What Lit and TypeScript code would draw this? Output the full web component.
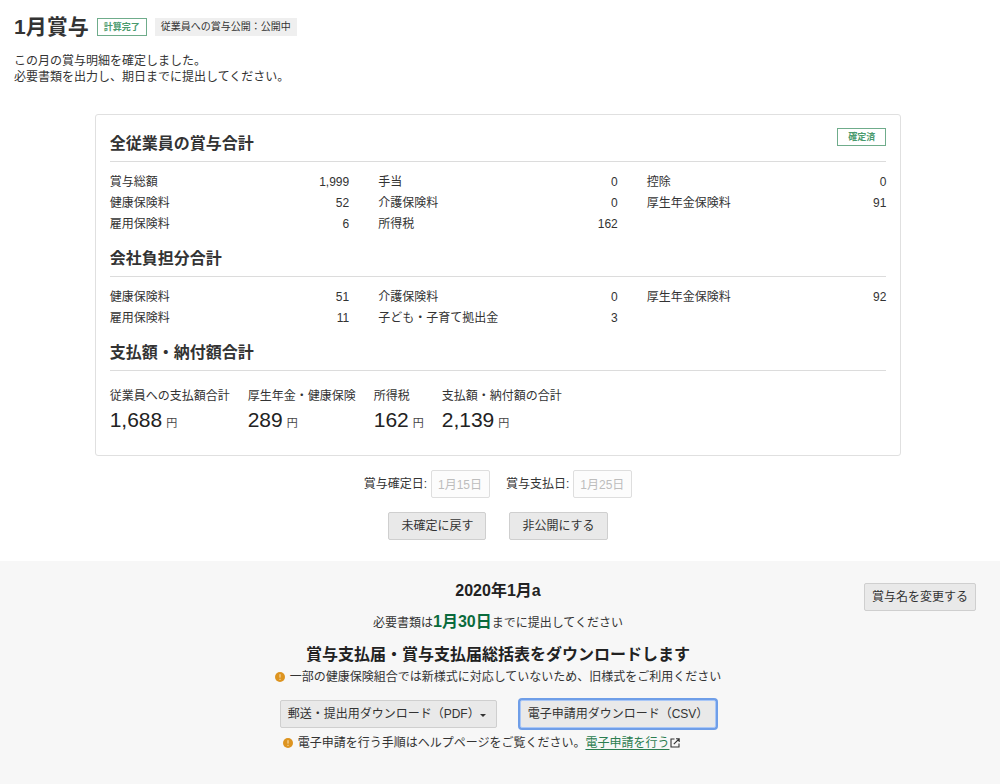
import { LitElement, html, css, svg } from "lit";
import { customElement } from "lit/decorators.js";

type Entry = [label: string, amount: string];

const employeeTotals: Entry[][] = [
  [["賞与総額", "1,999"], ["健康保険料", "52"], ["雇用保険料", "6"]],
  [["手当", "0"], ["介護保険料", "0"], ["所得税", "162"]],
  [["控除", "0"], ["厚生年金保険料", "91"]],
];

const companyTotals: Entry[][] = [
  [["健康保険料", "51"], ["雇用保険料", "11"]],
  [["介護保険料", "0"], ["子ども・子育て拠出金", "3"]],
  [["厚生年金保険料", "92"]],
];

const payments: Entry[] = [
  ["従業員への支払額合計", "1,688"],
  ["厚生年金・健康保険", "289"],
  ["所得税", "162"],
  ["支払額・納付額の合計", "2,139"],
];

const alertIcon = html`<svg class="alert" viewBox="0 0 10 10" aria-hidden="true">
  ${svg`<circle cx="5" cy="5" r="5" fill="#dd9420"/><path d="M5 2.2v3.4M5 6.8v1.1" stroke="#fbe6c0" stroke-width="1"/>`}
</svg>`;

const externalIcon = html`<svg class="external" viewBox="0 0 10 10" aria-hidden="true">
  ${svg`<path d="M4.5 1H1v8h8V5.5M6 .8h3.2V4M9 1 3.8 6.2" fill="none" stroke="#333" stroke-width="1.1"/>`}
</svg>`;

@customElement("app-root")
export class AppRoot extends LitElement {
  static styles = css`
    :host {
      display: flex;
      flex-direction: column;
      min-height: 100vh;
      background: #fff;
      color: #333;
      font: 12px/16px "Liberation Sans", "Noto Sans CJK JP", sans-serif;
    }
    * {
      box-sizing: border-box;
    }
    h1, h2, h3, p, dl, dd {
      margin: 0;
    }
    .page {
      padding: 12px 18px 21px 14px;
    }
    .title {
      display: flex;
      align-items: center;
      gap: 8px;
    }
    h1 {
      font-size: 21px;
      line-height: 30px;
    }
    .badge {
      padding: 0 6px;
      border: 1px solid #6fac8b;
      color: #4a9a6e;
      background: #fff;
      font-size: 9px;
      font-weight: 700;
      line-height: 16px;
    }
    .badge.wide {
      padding: 0 10px;
    }
    .tag {
      padding: 0 6px;
      background: #efefef;
      font-size: 10px;
      line-height: 18px;
    }
    .lead {
      margin-top: 11px;
    }
    .card {
      width: 83.3333%;
      margin: 29px auto 0;
      padding: 13px 14px 18px;
      border: 1px solid #e0e0e0;
      border-radius: 3px;
    }
    .head {
      display: flex;
      justify-content: space-between;
      align-items: flex-start;
      border-bottom: 1px solid #dcdcdc;
    }
    .head h2 {
      padding: 4px 0 5px;
    }
    h2, h3 {
      font-size: 16px;
      line-height: 24px;
    }
    .columns {
      display: grid;
      grid-template-columns: repeat(3, 1fr);
      gap: 29px;
      margin: 10px 0 8px;
    }
    .entry {
      display: flex;
      justify-content: space-between;
      line-height: 21px;
    }
    .stats {
      display: flex;
      gap: 18px;
      margin-top: 16px;
      line-height: 18px;
    }
    .amount {
      margin-top: 1px;
      color: #222;
      font-size: 21px;
      line-height: 28px;
    }
    .unit {
      margin-left: 4px;
      color: #444;
      font-size: 11px;
    }
    .row {
      display: flex;
      justify-content: center;
      margin-top: 14px;
      gap: 23px;
    }
    .fields {
      gap: 16px;
    }
    .field {
      display: flex;
      align-items: center;
      gap: 4px;
    }
    input {
      width: 59px;
      height: 28px;
      padding: 0 6px 2px;
      border: 1px solid #dedede;
      border-radius: 2px;
      background: #fcfcfc;
      color: #bdbdbd;
      font: inherit;
    }
    button {
      height: 28px;
      padding: 0 7px;
      border: 1px solid #cfcfcf;
      border-radius: 2px;
      background: #e9e9e9;
      color: #333;
      font: inherit;
      white-space: nowrap;
    }
    .roomy {
      padding: 0 12px;
    }
    .band {
      flex: 1;
      display: grid;
      grid-template-columns: 1fr auto 1fr;
      align-items: start;
      padding: 18px 24px 24px 20px;
      background: #f7f7f7;
    }
    .center {
      grid-column: 2;
      text-align: center;
    }
    .band h2, .band h3 {
      color: #222;
    }
    .rename {
      justify-self: end;
      margin-top: 4px;
    }
    .due {
      margin: 7px 0 8px;
      line-height: 24px;
    }
    .due strong {
      color: #0a6b3d;
      font-size: 16px;
    }
    .note {
      display: flex;
      justify-content: center;
      align-items: center;
      margin-top: 1px;
      line-height: 18px;
    }
    .help {
      justify-content: flex-start;
      margin-top: 6px;
      padding-left: 8px;
    }
    .alert {
      width: 10px;
      height: 10px;
      margin-right: 5px;
    }
    .external {
      width: 10px;
      height: 10px;
      margin-left: 1px;
    }
    a {
      color: #2b7d50;
      text-underline-offset: 2px;
    }
    .menu {
      display: flex;
      align-items: center;
    }
    .menu::after {
      content: "";
      margin: 2px 3px 0 0;
      border: 3px solid transparent;
      border-top-color: #333;
      border-bottom: 0;
    }
    .active {
      border-color: #a9c7f7;
      box-shadow: 0 0 0 2px #6f9ee8;
    }
  `;

  private heading(text: string, badge: unknown = "") {
    return html`<div class="head"><h2>${text}</h2>${badge}</div>`;
  }

  private columns(groups: Entry[][]) {
    return html`<div class="columns">
      ${groups.map((group) => html`<dl>
        ${group.map(([label, amount]) => html`<div class="entry"><dt>${label}</dt><dd>${amount}</dd></div>`)}
      </dl>`)}
    </div>`;
  }

  render() {
    return html`
      <main class="page">
        <div class="title">
          <h1>1月賞与</h1>
          <span class="badge">計算完了</span>
          <span class="tag">従業員への賞与公開：公開中</span>
        </div>
        <p class="lead">この月の賞与明細を確定しました。<br />必要書類を出力し、期日までに提出してください。</p>

        <section class="card">
          ${this.heading("全従業員の賞与合計", html`<span class="badge wide">確定済</span>`)}
          ${this.columns(employeeTotals)}
          ${this.heading("会社負担分合計")}
          ${this.columns(companyTotals)}
          ${this.heading("支払額・納付額合計")}
          <dl class="stats">
            ${payments.map(([label, amount]) => html`<div>
              <dt>${label}</dt>
              <dd class="amount">${amount}<span class="unit">円</span></dd>
            </div>`)}
          </dl>
        </section>

        <div class="row fields">
          <div class="field">
            <label for="fixed">賞与確定日:</label>
            <input id="fixed" type="text" value="1月15日" disabled />
          </div>
          <div class="field">
            <label for="paid">賞与支払日:</label>
            <input id="paid" type="text" value="1月25日" disabled />
          </div>
        </div>
        <div class="row">
          <button type="button" class="roomy">未確定に戻す</button>
          <button type="button" class="roomy">非公開にする</button>
        </div>
      </main>

      <section class="band">
        <div class="center">
          <h2>2020年1月a</h2>
          <p class="due">必要書類は<strong>1月30日</strong>までに提出してください</p>
          <h3>賞与支払届・賞与支払届総括表をダウンロードします</h3>
          <p class="note">${alertIcon}一部の健康保険組合では新様式に対応していないため、旧様式をご利用ください</p>
          <div class="row">
            <button type="button" class="menu" aria-haspopup="menu">郵送・提出用ダウンロード（PDF）</button>
            <button type="button" class="active">電子申請用ダウンロード（CSV）</button>
          </div>
          <p class="note help">${alertIcon}電子申請を行う手順はヘルプページをご覧ください。<a href="#">電子申請を行う</a>${externalIcon}</p>
        </div>
        <button type="button" class="rename">賞与名を変更する</button>
      </section>
    `;
  }
}
